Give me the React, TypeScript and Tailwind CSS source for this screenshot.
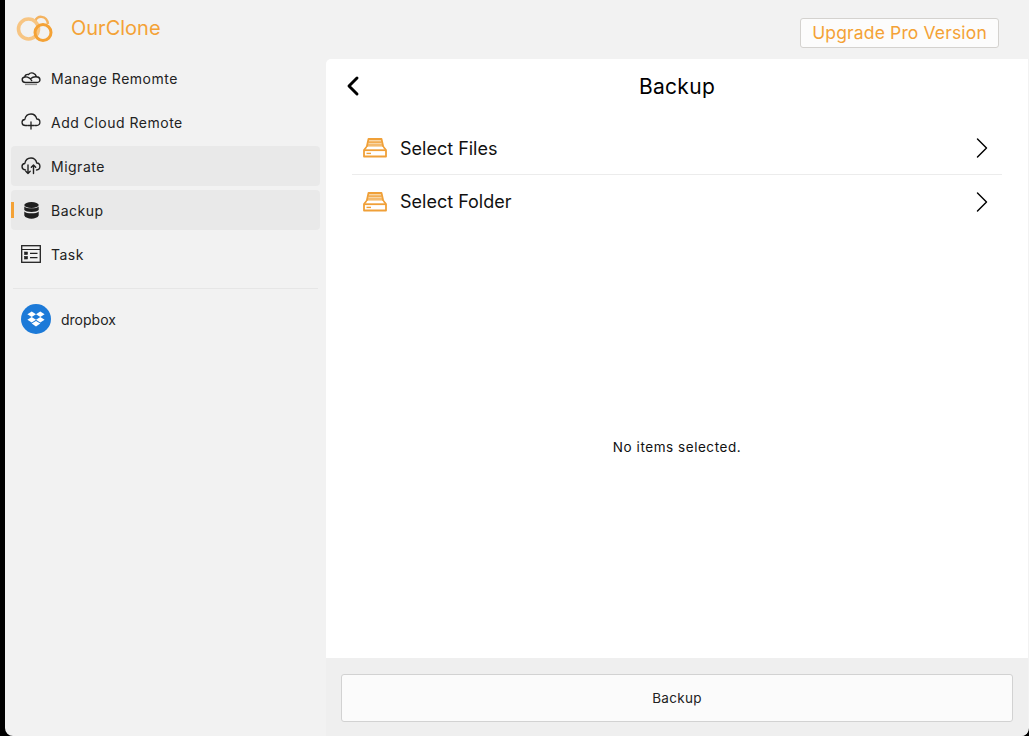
import type { ReactNode } from "react";
import { ChevronLeft, ChevronRight } from "lucide-react";

function Logo() {
  return (
    <svg width="38" height="30" viewBox="0 0 38 30" fill="none">
      <path d="M19.5 7 C20 1 31 1 32 10" stroke="#f3b25f" strokeWidth="2.4" />
      <circle cx="12.5" cy="15" r="10" stroke="#f7c583" strokeWidth="3.6" />
      <circle cx="27" cy="18.5" r="8" stroke="#f4a236" strokeWidth="3" />
    </svg>
  );
}

function ManageIcon() {
  return (
    <svg width="20" height="15" viewBox="0 1.5 20 14" fill="none" stroke="#222" strokeWidth="1.4" strokeLinejoin="round">
      <path d="M4.5 12.5 H16 C20 12.5 20 7 15.5 6.8 C14.5 3 10 1.5 7.5 4.5 C5.5 4 4 5 3.8 7 C0 7.5 0.5 12.5 4.5 12.5 Z" />
      <path d="M3.8 7 C7 6.5 9 8 11 11 M15.5 6.8 C13 6.5 11 7.5 9 9" />
      <path d="M4 14.6 H16" strokeWidth="1" stroke="#888" />
    </svg>
  );
}

function AddCloudIcon() {
  return (
    <svg width="20" height="18" viewBox="0 0 20 18" fill="none" stroke="#222" strokeWidth="1.3" strokeLinecap="round" strokeLinejoin="round">
      <path d="M6 12.5 H4.5 C0 12.5 0 6.8 3.8 6.5 C4.5 2.5 7.5 1 10 1 C13 1 15 3 15.8 6 C20 6.2 20 12.5 15.5 12.5 H14" />
      <path d="M10 9 V16 M6.8 12.5 H13.2" />
    </svg>
  );
}

function MigrateIcon() {
  return (
    <svg width="20" height="18" viewBox="0 0 20 18" fill="none" stroke="#222" strokeWidth="1.4" strokeLinecap="round" strokeLinejoin="round">
      <path d="M4.5 13 C0 12.8 0 6.8 3.8 6.5 C4.5 2.5 7.5 1 10 1 C13 1 15 3 15.8 6 C20 6.2 20 12.8 15.5 13" />
      <path d="M7 8 V16.5 M4.8 14.3 L7 16.5 L9.2 14.3 M12.5 16.5 V8 M10.3 10.2 L12.5 8 L14.7 10.2" />
    </svg>
  );
}

function BackupIcon() {
  return (
    <svg width="15" height="17" viewBox="0 0 15 17" fill="#1f1f1f">
      <ellipse cx="7.5" cy="3" rx="7.2" ry="3" />
      <path d="M0.3 4.4 C2 7 13 7 14.7 4.4 V8 C13 10.6 2 10.6 0.3 8 Z" />
      <path d="M0.3 9.4 C2 12 13 12 14.7 9.4 V13.6 C13 17.8 2 17.8 0.3 13.6 Z" />
    </svg>
  );
}

function TaskIcon() {
  return (
    <svg width="20" height="18" viewBox="0 0 20 18" fill="none" stroke="#222">
      <rect x="0.7" y="0.7" width="18.6" height="16.6" strokeWidth="1.3" />
      <path d="M1 4.5 H19" strokeWidth="1" />
      <rect x="3.5" y="7" width="3" height="2.6" fill="#222" strokeWidth="0.6" />
      <rect x="3.5" y="11.4" width="3" height="2.6" fill="#222" strokeWidth="0.6" />
      <path d="M9 8.3 H16.5 M9 12.7 H16.5" strokeWidth="1.2" />
    </svg>
  );
}

function DriveIcon() {
  return (
    <svg width="24" height="20" viewBox="0 0 24 20" fill="none" stroke="#f0a038" strokeWidth="1.8" strokeLinejoin="round">
      <path d="M5.5 1 H18.5 L20.5 10 H3.5 Z" fill="#f8d6a6" />
      <path d="M5.5 4.2 H18.5 M4.8 7 H19.2" strokeWidth="1.2" />
      <path d="M3.5 9 L1 12 V18.5 H23 V12 L20.5 9" fill="#fff" />
      <path d="M1 12.2 H23" />
      <path d="M3.5 15.4 H8" strokeWidth="1.4" />
    </svg>
  );
}

function DropboxBadge() {
  return (
    <span className="flex h-[30px] w-[30px] shrink-0 items-center justify-center rounded-full bg-[#1c7ad8]">
      <svg width="18" height="16" viewBox="0 0 18 16" fill="#fff">
        <path d="M4.7 0.5 L9 3.2 L4.7 6 L0.4 3.2 Z" />
        <path d="M13.3 0.5 L17.6 3.2 L13.3 6 L9 3.2 Z" />
        <path d="M4.7 6 L9 8.8 L4.7 11.5 L0.4 8.8 Z" />
        <path d="M13.3 6 L17.6 8.8 L13.3 11.5 L9 8.8 Z" />
        <path d="M9 9.9 L13.3 12.6 L9 15.4 L4.7 12.6 Z" />
      </svg>
    </span>
  );
}

function NavItem({ icon, label, hover, active }: { icon: ReactNode; label: string; hover?: boolean; active?: boolean }) {
  return (
    <div className={"relative flex h-10 items-center rounded-[4px] pl-2.5 " + (hover || active ? "bg-[#e9e9e9]" : "")}>
      {active && <span className="absolute left-0 top-[12px] h-4 w-[3px] bg-[#f4a236]" />}
      <span className="flex w-[20px] items-center justify-center">{icon}</span>
      <span className="ml-[10px] text-[14px] tracking-[0.5px] text-[#222]">{label}</span>
    </div>
  );
}

function PickRow({ label, border }: { label: string; border?: boolean }) {
  return (
    <div className={"flex h-[53px] items-center justify-between pl-[11px] pr-[2px] " + (border ? "border-b border-[#ececec]" : "")}>
      <div className="flex items-center">
        <DriveIcon />
        <span className="ml-[13px] text-[18px] text-[#111]">{label}</span>
      </div>
      <ChevronRight size={36} strokeWidth={0.95} className="text-black" />
    </div>
  );
}

export default function App() {
  return (
    <div className="h-[736px] w-[1029px] overflow-hidden bg-black pl-[5px] font-['Inter','Noto_Sans',sans-serif]">
      <div className="flex h-full overflow-hidden rounded-b-[8px] bg-[#f2f2f2]">
        <aside className="w-[321px] shrink-0">
          <div className="flex h-[58px] items-center pl-[11px]">
            <Logo />
            <span className="mb-[2px] ml-[17px] text-[20px] text-[#f4a236]">OurClone</span>
          </div>
          <nav className="flex flex-col gap-1 pl-[6px] pr-[6px]">
            <NavItem icon={<ManageIcon />} label="Manage Remomte" />
            <NavItem icon={<AddCloudIcon />} label="Add Cloud Remote" />
            <NavItem icon={<MigrateIcon />} label="Migrate" hover />
            <NavItem icon={<BackupIcon />} label="Backup" active />
            <NavItem icon={<TaskIcon />} label="Task" />
          </nav>
          <div className="mx-2 mt-[14px] border-t border-[#e6e6e6]" />
          <div className="flex h-[60px] items-center pl-4">
            <DropboxBadge />
            <span className="ml-[10px] text-[14px] text-[#222]">dropbox</span>
          </div>
        </aside>
        <main className="flex min-w-0 flex-1 flex-col pr-px">
          <div className="flex h-[59px] shrink-0 items-start justify-end pr-[29px] pt-[18px]">
            <button className="flex h-[30px] w-[199px] items-center justify-center rounded-[3px] border border-[#d4d2cf] bg-[#fcfcfc] text-[17.5px] tracking-[0.15px] text-[#f4a236]">
              Upgrade Pro Version
            </button>
          </div>
          <div className="flex flex-1 flex-col rounded-tl-[5px] bg-white">
            <div className="relative flex h-[54px] items-center justify-center">
              <ChevronLeft size={32} strokeWidth={2.2} className="absolute left-[11px] top-[11px] text-black" />
              <h1 className="pt-[2px] text-[21px] tracking-[0.3px] text-black">Backup</h1>
            </div>
            <div className="mx-[26px] mt-[9px]">
              <PickRow label="Select Files" border />
              <PickRow label="Select Folder" />
            </div>
            <div className="flex flex-1 items-center justify-center pt-[8px] text-[13.5px] tracking-[0.55px] text-[#111]">
              No items selected.
            </div>
          </div>
          <div className="flex h-[78px] shrink-0 bg-[#efefef] pl-[15px] pr-[15px] pt-4">
            <button className="h-12 w-full rounded-[3px] border border-[#d2d2d2] bg-[#fbfbfb] text-[13.5px] tracking-[0.3px] text-[#222]">
              Backup
            </button>
          </div>
        </main>
      </div>
    </div>
  );
}
